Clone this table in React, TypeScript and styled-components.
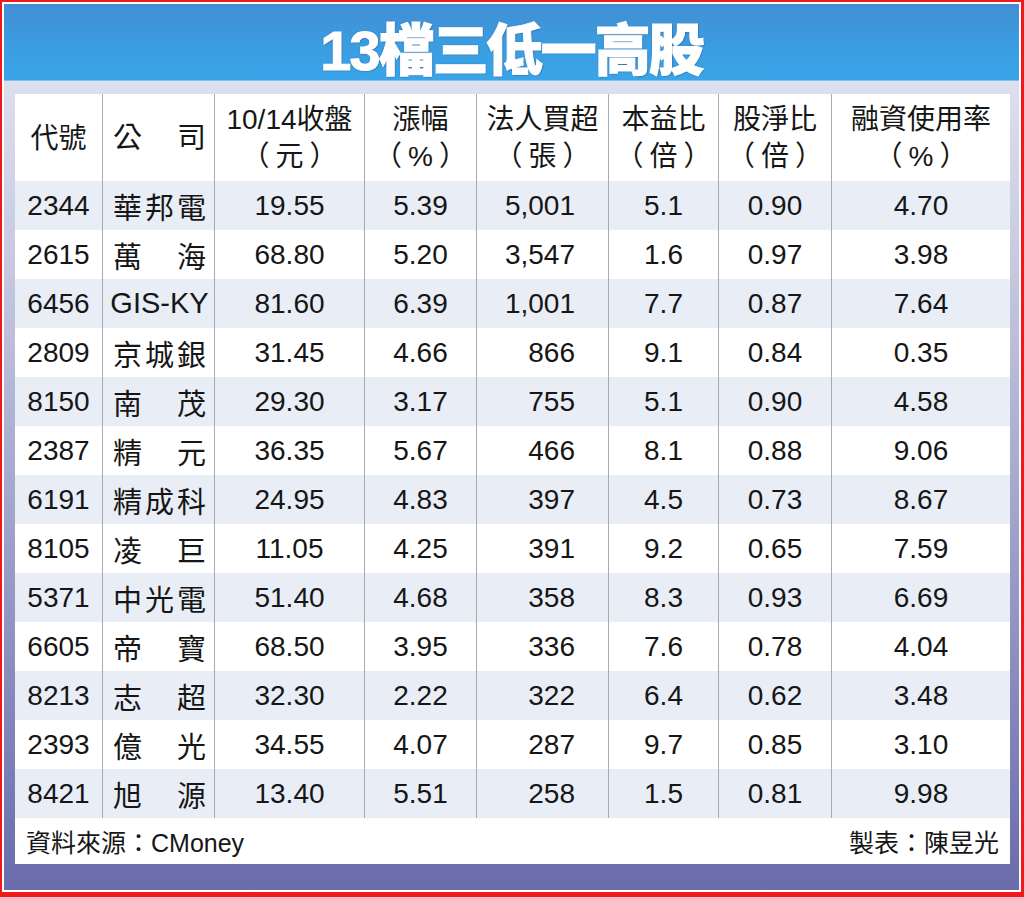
import React from "react";
import styled, { createGlobalStyle } from "styled-components";

interface StockRow {
  code: string;
  name: string;
  close: string;
  change: string;
  netBuy: string;
  pe: string;
  pb: string;
  margin: string;
}

const rows: StockRow[] = [
  { code: "2344", name: "華邦電", close: "19.55", change: "5.39", netBuy: "5,001", pe: "5.1", pb: "0.90", margin: "4.70" },
  { code: "2615", name: "萬海", close: "68.80", change: "5.20", netBuy: "3,547", pe: "1.6", pb: "0.97", margin: "3.98" },
  { code: "6456", name: "GIS-KY", close: "81.60", change: "6.39", netBuy: "1,001", pe: "7.7", pb: "0.87", margin: "7.64" },
  { code: "2809", name: "京城銀", close: "31.45", change: "4.66", netBuy: "866", pe: "9.1", pb: "0.84", margin: "0.35" },
  { code: "8150", name: "南茂", close: "29.30", change: "3.17", netBuy: "755", pe: "5.1", pb: "0.90", margin: "4.58" },
  { code: "2387", name: "精元", close: "36.35", change: "5.67", netBuy: "466", pe: "8.1", pb: "0.88", margin: "9.06" },
  { code: "6191", name: "精成科", close: "24.95", change: "4.83", netBuy: "397", pe: "4.5", pb: "0.73", margin: "8.67" },
  { code: "8105", name: "凌巨", close: "11.05", change: "4.25", netBuy: "391", pe: "9.2", pb: "0.65", margin: "7.59" },
  { code: "5371", name: "中光電", close: "51.40", change: "4.68", netBuy: "358", pe: "8.3", pb: "0.93", margin: "6.69" },
  { code: "6605", name: "帝寶", close: "68.50", change: "3.95", netBuy: "336", pe: "7.6", pb: "0.78", margin: "4.04" },
  { code: "8213", name: "志超", close: "32.30", change: "2.22", netBuy: "322", pe: "6.4", pb: "0.62", margin: "3.48" },
  { code: "2393", name: "億光", close: "34.55", change: "4.07", netBuy: "287", pe: "9.7", pb: "0.85", margin: "3.10" },
  { code: "8421", name: "旭源", close: "13.40", change: "5.51", netBuy: "258", pe: "1.5", pb: "0.81", margin: "9.98" },
];

// split CJK names so each glyph can be spread across the cell
const nameParts = (name: string) => (/^[\x00-\x7f]+$/.test(name) ? [name] : name.split(""));

const App: React.FC = () => {
  return (
    <>
      <GlobalStyle />
      <Outer>
        <Inner>
          <TitleBar>13檔三低一高股</TitleBar>
          <Body>
            <Table>
              <HeaderRow>
                <HeadCell>代號</HeadCell>
                <HeadCell>
                  <Spread>
                    <span>公</span>
                    <span>司</span>
                  </Spread>
                </HeadCell>
                <HeadCell>
                  <span>10/14收盤</span>
                  <Unit>（元）</Unit>
                </HeadCell>
                <HeadCell>
                  <span>漲幅</span>
                  <Unit>（%）</Unit>
                </HeadCell>
                <HeadCell>
                  <span>法人買超</span>
                  <Unit>（張）</Unit>
                </HeadCell>
                <HeadCell>
                  <span>本益比</span>
                  <Unit>（倍）</Unit>
                </HeadCell>
                <HeadCell>
                  <span>股淨比</span>
                  <Unit>（倍）</Unit>
                </HeadCell>
                <HeadCell $last>
                  <span>融資使用率</span>
                  <Unit>（%）</Unit>
                </HeadCell>
              </HeaderRow>
              {rows.map((r, i) => (
                <DataRow key={r.code} $striped={i % 2 === 0}>
                  <Cell>{r.code}</Cell>
                  <Cell>
                    <Spread>
                      {nameParts(r.name).map((p, j) => (
                        <span key={j}>{p}</span>
                      ))}
                    </Spread>
                  </Cell>
                  <Cell>{r.close}</Cell>
                  <Cell>{r.change}</Cell>
                  <Cell $align="right">{r.netBuy}</Cell>
                  <Cell>{r.pe}</Cell>
                  <Cell>{r.pb}</Cell>
                  <Cell $last>{r.margin}</Cell>
                </DataRow>
              ))}
              <Footer>
                <span>資料來源：CMoney</span>
                <span>製表：陳昱光</span>
              </Footer>
            </Table>
          </Body>
        </Inner>
      </Outer>
    </>
  );
};

export default App;

const GlobalStyle = createGlobalStyle`
  html, body {
    margin: 0;
    padding: 0;
    background: #ffffff;
  }
  body {
    font-family: "Liberation Sans", "Noto Sans CJK TC", Arial, sans-serif;
    color: #161616;
  }
`;

const COLS = "88px 112px 150px 112px 132px 110px 113px 178px";

const Outer = styled.div`
  width: 1024px;
  height: 897px;
  box-sizing: border-box;
  border-style: solid;
  border-color: #f01818;
  border-width: 2px 3px 5px 2px;
  padding: 2px;
  background: #ffffff;
  display: flex;
`;

const Inner = styled.div`
  flex: 1;
  display: flex;
  flex-direction: column;
  background: linear-gradient(to bottom, #e6e9f2 0%, #c6c8e0 30%, #6a6cab 100%);
`;

const TitleBar = styled.div`
  height: 77px;
  box-sizing: border-box;
  padding-top: 6px;
  display: flex;
  align-items: center;
  justify-content: center;
  background: linear-gradient(to bottom, #438ed3 0%, #3a9ee2 60%, #3ba4e8 100%);
  border-bottom: 1px solid #7fc0ee;
  color: #ffffff;
  font-family: "Liberation Sans", "Noto Sans CJK TC", sans-serif;
  font-weight: 900;
  font-size: 56px;
  letter-spacing: -2px;
  -webkit-text-stroke: 1px #ffffff;
  text-shadow: 0 0 2px rgba(20, 40, 90, 0.45), 1px 1px 1px rgba(20, 40, 90, 0.3);
`;

const Body = styled.div`
  flex: 1;
  padding: 13px 8px 26px 11px;
  display: flex;
`;

const Table = styled.div`
  width: 995px;
  display: flex;
  flex-direction: column;
  background: #ffffff;
  font-size: 28px;
`;

const HeaderRow = styled.div`
  display: grid;
  grid-template-columns: ${COLS};
  height: 87px;
  background: #ffffff;
`;

const DataRow = styled.div<{ $striped: boolean }>`
  display: grid;
  grid-template-columns: ${COLS};
  height: 49px;
  background: ${({ $striped }) => ($striped ? "#e9edf6" : "#ffffff")};
`;

const HeadCell = styled.div<{ $last?: boolean }>`
  display: flex;
  flex-direction: column;
  align-items: stretch;
  justify-content: center;
  text-align: center;
  line-height: 37px;
  font-size: 28px;
  white-space: nowrap;
  border-right: ${({ $last }) => ($last ? "none" : "1px solid #a9abb3")};
  padding-top: 1px;
`;

const Unit = styled.span`
  font-size: 28px;
  letter-spacing: 6px;
  padding-left: 6px;
`;

const Cell = styled.div<{ $align?: "center" | "right"; $last?: boolean }>`
  display: flex;
  align-items: center;
  justify-content: ${({ $align }) => ($align === "right" ? "flex-end" : "center")};
  padding-right: ${({ $align }) => ($align === "right" ? "33px" : "0")};
  white-space: nowrap;
  border-right: ${({ $last }) => ($last ? "none" : "1px solid #a9abb3")};
`;

const Spread = styled.div`
  flex: 1;
  display: flex;
  justify-content: space-between;
  align-items: center;
  padding: 0 8px 0 10px;
  font-size: 29px;
`;

const Footer = styled.div`
  height: 45px;
  display: flex;
  align-items: center;
  justify-content: space-between;
  padding: 0 11px 0 11px;
  font-size: 25px;
  background: #ffffff;
`;
